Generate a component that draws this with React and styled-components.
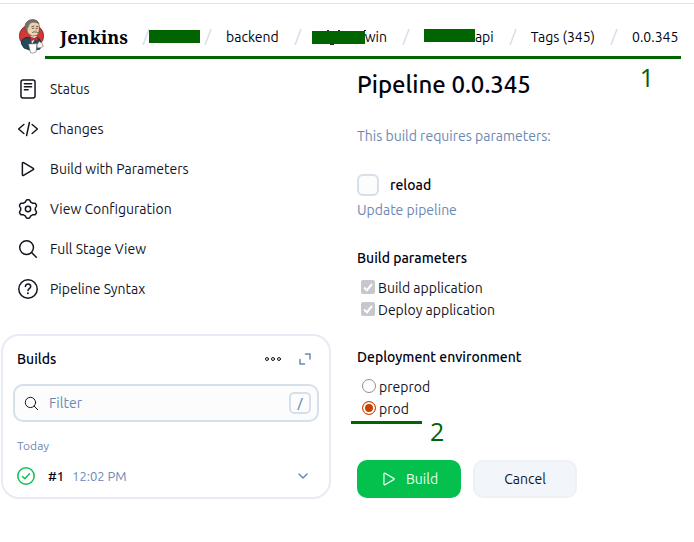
import React, { useState } from "react";
import styled, { createGlobalStyle } from "styled-components";

const ink = "#14141f";
const muted = "#6b88b4";
const line = "#d6e0ea";
const mark = "#006400";

const GlobalStyle = createGlobalStyle`
  *, *::before, *::after { box-sizing: border-box; }
  body {
    margin: 0;
    background: #fff;
    color: ${ink};
    font: 400 14px/20px Ubuntu, Roboto, "Noto Sans", sans-serif;
  }
  a { color: inherit; text-decoration: none; }
  button, input { font: inherit; color: inherit; }
`;

const Page = styled.div`
  padding-top: 3px;
`;

const Header = styled.header`
  position: relative;
  display: flex;
  align-items: center;
  height: 66px;
  padding-left: 19px;
  border-top: 1px solid #e5e5e8;
`;

const Brand = styled.a`
  display: flex;
  align-items: center;
  gap: 16px;
  width: 123px;
  flex: none;
  color: #000010;
  font: 700 18px/24px "Noto Serif", "Liberation Serif", serif;
`;

const Crumbs = styled.ol`
  display: flex;
  align-items: center;
  margin: 0;
  padding: 0;
  list-style: none;
  white-space: nowrap;
  color: #000010;
`;

const Crumb = styled.li`
  display: flex;
  align-items: center;
`;

const CrumbLink = styled.a`
  display: flex;
  align-items: center;
`;

const SlashIcon = styled.svg`
  width: 8px;
  height: 18px;
  margin: 0 14px 0 ${(p) => p.$before}px;
`;

const Redaction = styled.svg`
  width: ${(p) => p.$width}px;
  height: 16px;
  margin-left: ${(p) => p.$pull || 0}px;
  overflow: visible;
`;

const HeaderRule = styled.div`
  position: absolute;
  left: 45px;
  right: 13px;
  top: 52px;
  height: 3px;
  background: ${mark};
`;

const Note = styled.span`
  position: absolute;
  font: 400 25px/25px "Open Sans", "Noto Sans", sans-serif;
  color: ${mark};
`;

const NoteOne = styled(Note)`
  top: 61px;
  right: 40px;
`;

const NoteTwo = styled(Note)`
  top: 21px;
  left: 73px;
`;

const Columns = styled.div`
  display: grid;
  grid-template-columns: 331px minmax(0, 1fr);
  column-gap: 26px;
  align-items: start;
`;

const Tasks = styled.nav`
  display: flex;
  flex-direction: column;
  padding-left: 18px;
`;

const Task = styled.a`
  display: flex;
  align-items: center;
  gap: 12px;
  height: 40px;
`;

const Icon = styled.svg`
  flex: none;
  width: ${(p) => p.$size || 20}px;
  height: ${(p) => p.$size || 20}px;
  fill: none;
  stroke: currentColor;
  stroke-width: ${(p) => p.$stroke || 32};
  stroke-linecap: round;
  stroke-linejoin: round;
`;

const Card = styled.section`
  margin: 25px 0 0 1px;
  padding: 10px 10px 6px;
  border: 2px solid #e6ebf4;
  border-radius: 18px;
`;

const CardHead = styled.div`
  display: flex;
  align-items: center;
  height: 26px;
  margin-right: -2px;
  padding-left: 4px;
`;

const CardTitle = styled.h2`
  flex: 1;
  margin: 0;
  font: inherit;
  font-weight: 500;
  color: #000010;
`;

const IconButton = styled.button`
  display: grid;
  place-items: center;
  width: 32px;
  height: 26px;
  padding: 0;
  border: 0;
  background: none;
  color: ${(p) => (p.$muted ? muted : ink)};
`;

const FilterBox = styled.label`
  display: flex;
  align-items: center;
  height: 38px;
  margin-top: 12px;
  padding: 0 6px 0 9px;
  gap: 10px;
  border: 2px solid ${line};
  border-radius: 10px;
  background: #fcfcfd;
`;

const FilterInput = styled.input`
  flex: 1;
  min-width: 0;
  padding: 0;
  border: 0;
  outline: 0;
  background: none;
  &::placeholder { color: ${muted}; opacity: 1; }
`;

const Key = styled.kbd`
  display: grid;
  place-items: center;
  width: 22px;
  height: 22px;
  border: 2px solid ${line};
  border-radius: 5px;
  color: ${muted};
  font: 500 13px/18px Ubuntu, Roboto, sans-serif;
`;

const Day = styled.h3`
  margin: 14px 4px 0;
  font: inherit;
  font-size: 12px;
  font-weight: 400;
  color: ${muted};
`;

const BuildRow = styled.div`
  display: flex;
  align-items: center;
  height: 30px;
  margin-top: 5px;
  padding-left: 4px;
  font-size: 13px;
`;

const Check = styled(Icon)`
  color: #12bf54;
  margin-right: 13px;
`;

const BuildNumber = styled.a`
  color: #000010;
  font-weight: 500;
  margin-right: 8px;
`;

const Time = styled.span`
  flex: 1;
  color: ${muted};
`;

const Main = styled.main`
  min-width: 0;
`;

const Title = styled.h1`
  margin: 0;
  color: #000010;
  font: inherit;
  font-size: 24px;
  font-weight: 500;
  line-height: 32px;
`;

const Intro = styled.p`
  margin: 25px 0 0;
  color: ${muted};
`;

const ReloadLabel = styled.label`
  display: flex;
  align-items: center;
  gap: 11px;
  height: 22px;
  margin-top: 28px;
  color: #000010;
  font-weight: 500;
`;

const BigCheckbox = styled.input`
  appearance: none;
  width: 22px;
  height: 22px;
  margin: 0;
  border: 2px solid ${line};
  border-radius: 6px;
  background: #fcfcfd;
  &:checked { background: ${muted}; }
`;

const Hint = styled.p`
  margin: 4px 0 0;
  color: ${muted};
`;

const Group = styled.fieldset`
  margin: ${(p) => p.$gap}px 0 0;
  padding: 0;
  border: 0;
`;

const Legend = styled.legend`
  padding: 0;
  margin-bottom: 9px;
  color: #000010;
  font-weight: 500;
`;

const Option = styled.label`
  display: flex;
  align-items: center;
  gap: 3px;
  height: 22px;
  padding-left: ${(p) => p.$indent}px;
`;

const TickBox = styled.span`
  display: grid;
  width: 14px;
  height: 14px;
  margin-bottom: 2px;
  > * { grid-area: 1 / 1; width: 14px; height: 14px; }
`;

const Tick = styled.input`
  appearance: none;
  margin: 0;
  border-radius: 2px;
  background: #c7c7ce;
`;

const Radio = styled.input`
  appearance: none;
  width: 14px;
  height: 14px;
  margin: 0 0 2px;
  border: 1px solid #8f8f9d;
  border-radius: 50%;
  background: #fff;
  &:checked {
    border-color: #d04a0c;
    background: #c84200;
    box-shadow: inset 0 0 0 2px #fff;
  }
`;

const Marked = styled.div`
  position: relative;
`;

const MarkedRule = styled.div`
  position: absolute;
  left: -6px;
  top: 23px;
  width: 71px;
  height: 3px;
  background: ${mark};
`;

const Actions = styled.div`
  display: flex;
  gap: 12px;
  margin-top: 40px;
`;

const Button = styled.button`
  display: flex;
  align-items: center;
  justify-content: center;
  gap: 8px;
  width: 104px;
  height: 38px;
  padding: 0;
  border: 2px solid ${(p) => (p.$primary ? "#04c04d" : "#edf1f6")};
  border-radius: 10px;
  background: ${(p) => (p.$primary ? "#04c04d" : "#f2f5f9")};
  color: ${(p) => (p.$primary ? "#e9fff1" : ink)};
`;

const PlayPath = () => (
  <path d="M112 111v290c0 17.440 17 28.520 31 20.160l247.900-148.370c12.120-7.250 12.120-26.330 0-33.580L143 90.840c-14-8.360-31 2.720-31 20.160z" />
);

const SearchPath = () => (
  <>
    <circle cx="220" cy="220" r="176" />
    <path d="M348 348l120 120" />
  </>
);

// Outline of a gear with six flattened teeth, one pointing straight up.
const gearOutline = Array.from({ length: 120 }, (_, i) => {
  const angle = (i / 120) * Math.PI * 2;
  const tooth = Math.max(-1, Math.min(1, -1.5 * Math.cos(6 * angle)));
  const radius = 212 + 24 * tooth;
  const x = Math.round(256 + radius * Math.cos(angle));
  const y = Math.round(256 + radius * Math.sin(angle));
  return `${i ? "L" : "M"}${x} ${y}`;
}).join("") + "z";

const tasks = [
  ["Status", <><rect x="76" y="26" width="360" height="460" rx="52" /><path d="M164 124h184M164 200h184M164 276h96" /></>],
  ["Changes", <path d="M150 142L14 256l136 114M362 142l136 114-136 114M292 90l-72 332" />],
  ["Build with Parameters", <PlayPath />],
  ["View Configuration", <><circle cx="256" cy="256" r="68" /><path d={gearOutline} /></>],
  ["Full Stage View", <SearchPath />],
  ["Pipeline Syntax", <><circle cx="256" cy="256" r="236" /><path d="M190 192c2-42 36-64 72-62 34 2 62 24 62 62 0 52-64 54-68 104" strokeWidth="40" /><circle cx="254" cy="365" r="12" strokeWidth="26" /></>],
];

function Slash({ before = 15 }) {
  return (
    <SlashIcon viewBox="0 0 8 18" aria-hidden="true" $before={before}>
      <path d="M1 17L7 1" stroke={line} strokeWidth="1.500" />
    </SlashIcon>
  );
}

function Logo() {
  return (
    <svg width="25" height="35" viewBox="0 0 25 35" aria-hidden="true">
      <ellipse cx="12.500" cy="17" rx="12.200" ry="11.500" fill="#d33833" stroke="#5f2525" strokeWidth=".7" />
      <path d="M2.500 25Q1.500 20.500 7 18.500L17 18Q21.500 19 22 24L21 30 13 32 5 29z" fill="#26485b" stroke="#18232b" strokeWidth=".8" />
      <path d="M11.500 17L13 25 18 17z" fill="#f7f5ee" />
      <path d="M6.500 7Q7 1 13.500 .8 19.800 .8 20.300 7 20.800 14 17.800 16.500 13 18.500 9.500 15 7 12.500 6.500 7z" fill="#efd3b0" stroke="#4a3a32" strokeWidth=".6" />
      <path d="M6.500 12.500Q4.800 6.500 7.500 3.300 11 0 15 .7 18.500 1.100 19.800 4.500 16.500 3 13 3.300 9.800 4.500 9.300 8L8.300 9.200 8.200 12.800z" fill="#76716e" stroke="#45403d" strokeWidth=".4" />
      <path d="M12.800 7.600l2.200-.5M17.300 7.300l1.700.2M13.200 9.300h1.600M17.500 9.300h1.200" fill="none" stroke="#4d4340" strokeWidth=".8" strokeLinecap="round" />
      <path d="M13.500 13.400q1.600-1.200 2.800-.2 1.200-.8 2.500.4" fill="none" stroke="#6d625c" strokeWidth="1" strokeLinecap="round" />
      <path d="M16.300 8.500l1 3-1.300.3" fill="none" stroke="#a98565" strokeWidth=".5" />
      <path d="M11.300 17.800l3.700 1.500 3.700-1.500.3 4.200-3.700-1.500-3.900 1.800z" fill="#d52a2a" stroke="#781d1f" strokeWidth=".5" />
      <path d="M9.500 25l8.500-.3-1 8.300q-3 2-5.500.7z" fill="#fff" stroke="#666" strokeWidth=".6" />
      <path d="M18 26l2-3.500 3 1.500 1.200 3.500-3 1.300-3 .2z" fill="#f6f4f1" stroke="#77716e" strokeWidth=".6" />
    </svg>
  );
}

function TickOption({ children }) {
  return (
    <Option $indent={4}>
      <TickBox>
        <Tick type="checkbox" defaultChecked disabled />
        <svg viewBox="0 0 14 14" aria-hidden="true">
          <path d="M3 7.500L6 10.200 11 4" fill="none" stroke="#fff" strokeWidth="2" />
        </svg>
      </TickBox>
      {children}
    </Option>
  );
}

export default function App() {
  const [env, setEnv] = useState("prod");
  return (
    <Page>
      <GlobalStyle />
      <Header>
        <Brand href="#home"><Logo />Jenkins</Brand>
        <Crumbs>
          <Crumb>
            <Slash before={0} />
            <CrumbLink href="#folder" aria-label="Folder">
              <Redaction $width={51} $pull={-15}><rect y="1" width="51" height="13" fill={mark} /></Redaction>
            </CrumbLink>
          </Crumb>
          <Crumb><Slash before={4} /><CrumbLink href="#backend">backend</CrumbLink></Crumb>
          <Crumb>
            <Slash />
            <CrumbLink href="#win">
              <Redaction $width={53} $pull={-4}>
                <path d="M15 1.500h2M26 1.500h2M52 1.500h2M18 15.500h4" stroke="#1b2a1b" />
                <rect y="2" width="53" height="13" fill={mark} />
              </Redaction>
              win
            </CrumbLink>
          </Crumb>
          <Crumb>
            <Slash />
            <CrumbLink href="#api">
              <Redaction $width={51}><rect width="51" height="13" fill={mark} /></Redaction>
              api
            </CrumbLink>
          </Crumb>
          <Crumb><Slash /><CrumbLink href="#tags">Tags (345)</CrumbLink></Crumb>
          <Crumb><Slash /><CrumbLink href="#version">0.0.345</CrumbLink></Crumb>
        </Crumbs>
        <HeaderRule />
        <NoteOne>1</NoteOne>
      </Header>

      <Columns>
        <aside>
          <Tasks>
            {tasks.map(([name, art]) => (
              <Task key={name} href="#task">
                <Icon viewBox="0 0 512 512" $stroke={38}>{art}</Icon>
                {name}
              </Task>
            ))}
          </Tasks>
          <Card>
            <CardHead>
              <CardTitle>Builds</CardTitle>
              <IconButton aria-label="More">
                <Icon viewBox="0 0 16 16" $size={16} $stroke={1}>
                  <circle cx="2" cy="8" r="1.500" /><circle cx="8" cy="8" r="1.500" /><circle cx="14" cy="8" r="1.500" />
                </Icon>
              </IconButton>
              <IconButton aria-label="Expand" $muted>
                <Icon viewBox="0 0 14 14" $size={14} $stroke={1.5}>
                  <path d="M7.500 2H12v5M2 7.500V12h4.500" />
                </Icon>
              </IconButton>
            </CardHead>
            <FilterBox>
              <Icon viewBox="0 0 512 512" $size={15} $stroke={34}><SearchPath /></Icon>
              <FilterInput type="text" placeholder="Filter" aria-label="Filter" />
              <Key>/</Key>
            </FilterBox>
            <Day>Today</Day>
            <BuildRow>
              <Check viewBox="0 0 18 18" $size={18} $stroke={1.5}>
                <circle cx="9" cy="9" r="8.200" /><path d="M5.500 9.500l2.300 2.300 4.700-5" />
              </Check>
              <BuildNumber href="#1">#1</BuildNumber>
              <Time>12:02 PM</Time>
              <IconButton aria-label="Build menu" $muted>
                <Icon viewBox="0 0 12 12" $size={12} $stroke={1.5}><path d="M2 4l4 4 4-4" /></Icon>
              </IconButton>
            </BuildRow>
          </Card>
        </aside>

        <Main>
          <Title>Pipeline 0.0.345</Title>
          <Intro>This build requires parameters:</Intro>
          <ReloadLabel><BigCheckbox type="checkbox" />reload</ReloadLabel>
          <Hint>Update pipeline</Hint>
          <Group $gap={28}>
            <Legend>Build parameters</Legend>
            <TickOption>Build application</TickOption>
            <TickOption>Deploy application</TickOption>
          </Group>
          <Group $gap={26}>
            <Legend>Deployment environment</Legend>
            <Option $indent={5}>
              <Radio type="radio" name="env" checked={env === "preprod"} onChange={() => setEnv("preprod")} />
              preprod
            </Option>
            <Marked>
              <Option $indent={5}>
                <Radio type="radio" name="env" checked={env === "prod"} onChange={() => setEnv("prod")} />
                prod
              </Option>
              <MarkedRule />
              <NoteTwo>2</NoteTwo>
            </Marked>
          </Group>
          <Actions>
            <Button $primary>
              <Icon viewBox="0 0 512 512" $size={18} $stroke={36}><PlayPath /></Icon>
              Build
            </Button>
            <Button>Cancel</Button>
          </Actions>
        </Main>
      </Columns>
    </Page>
  );
}
